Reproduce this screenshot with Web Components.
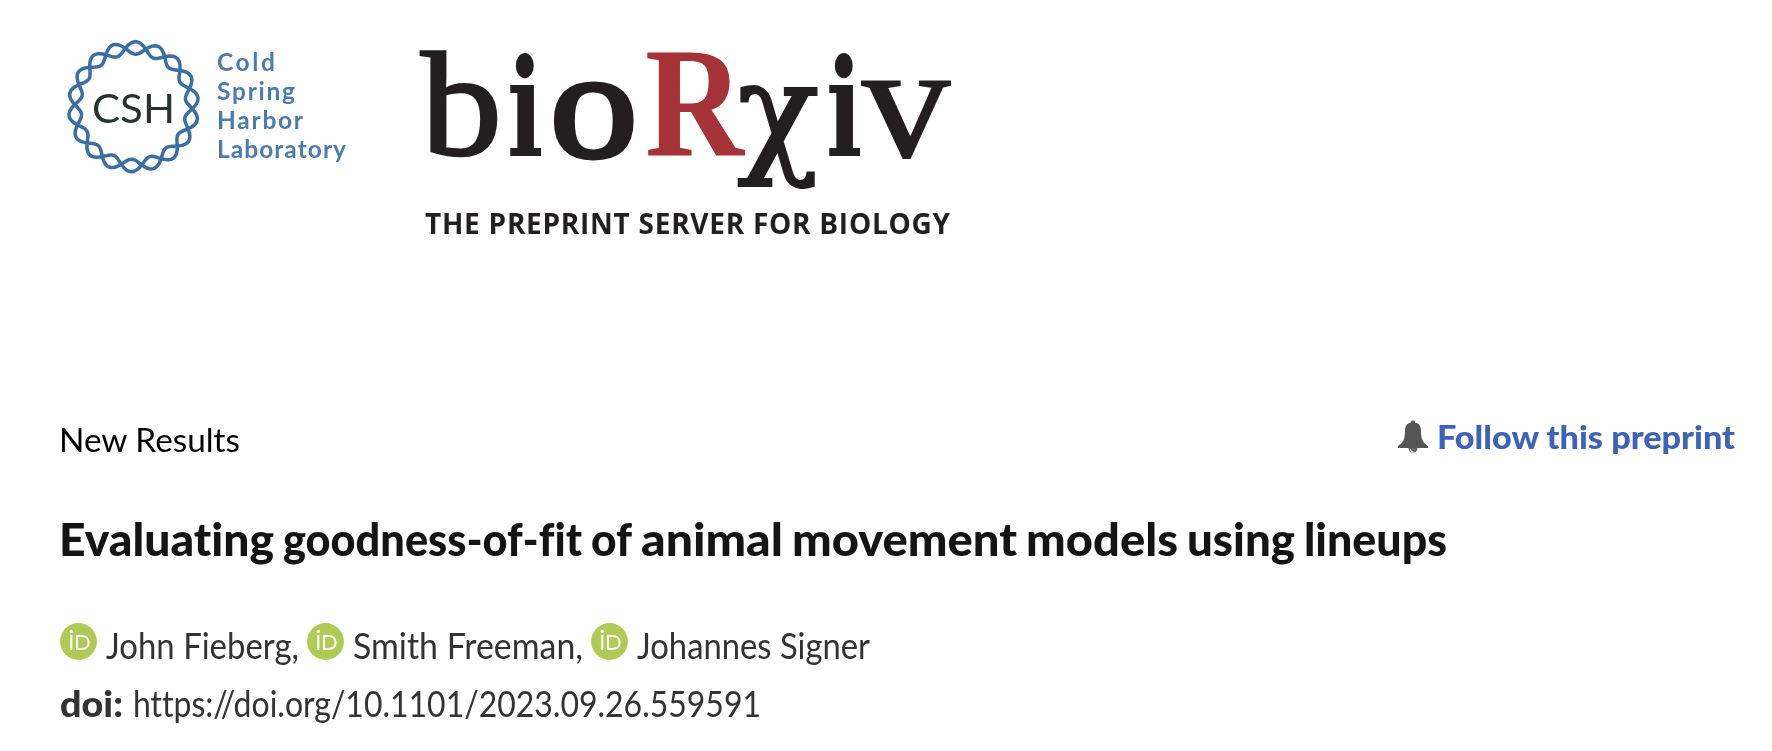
<!DOCTYPE html>
<html lang="en"><head><meta charset="utf-8"><title>bioRxiv</title>
<style>html,body{margin:0;background:#fff}body{font-family:Lato,"Open Sans",sans-serif;color:#333}</style></head>
<body><preprint-page></preprint-page>
<script>
function define(name, html, ready){
  customElements.define(name, class extends HTMLElement{
    connectedCallback(){
      if(this.shadowRoot) return;
      this.attachShadow({mode:'open'}).innerHTML = html;
      if(ready) ready.call(this);
    }
  });
}
// Text set to a given advance width by condensing or widening its letters.
define('fit-text', `<style>:host{display:block;white-space:pre;flex:none}span{display:inline-block;transform-origin:0 0;font-variant-ligatures:none}</style><span><slot></slot></span>`, function(){
  const s=this.shadowRoot.querySelector('span'), w=+this.getAttribute('w');
  this.style.width=w+'px';
  const fit=()=>{s.style.transform='none';s.style.transform='scaleX('+w/s.getBoundingClientRect().width+')'};
  fit(); document.fonts.ready.then(fit);
});
define('csh-logo', `<style>:host{display:block;width:380px;height:270px}svg{display:block;filter:blur(.6px)}</style>
<svg width="380" height="270" viewBox="0 0 380 270">
<g id="ring" fill="none" stroke="#3a6ea5" stroke-width="3.5"></g>
<text x="92" y="122.500" font-family="Lato" font-size="41" textLength="83" lengthAdjust="spacingAndGlyphs" fill="#2b3331">CSH</text>
<g font-family="Lato" font-weight="700" font-size="24.500" fill="#4c7bae">
<text x="217" y="71" textLength="58">Cold</text><text x="217" y="100" textLength="78">Spring</text>
<text x="217" y="129" textLength="86">Harbor</text><text x="217" y="158" textLength="129">Laboratory</text></g></svg>`, function(){
  const g=this.shadowRoot.getElementById('ring'); let out='';
  for(const sign of [1,-1]){
    let d='';
    for(let a=0;a<360;a+=2){
      const r=58.800+sign*6.300*Math.sin(9*(a-12)*Math.PI/180), t=a*Math.PI/180;
      d+=(a?'L':'M')+(133.5+r*Math.sin(t)).toFixed(2)+' '+(106.700-r*Math.cos(t)).toFixed(2);
    }
    out+='<path d="'+d+'Z"/>';
  }
  g.innerHTML=out;
});
define('biorxiv-logo', `<style>:host{display:block;width:600px;height:270px}svg{display:block;filter:blur(.6px)}</style>
<svg width="600" height="270" viewBox="380 0 600 270">
<g font-family="Liberation Serif" font-size="100" fill="#231f20" stroke="#231f20" stroke-width="0">
<text transform="translate(421,155) scale(1.62,1.49)" stroke-width="1.8">b</text>
<text transform="translate(507,156) scale(.96,1.34)" font-family="DejaVu Serif" font-weight="700">i</text>
<text transform="translate(550,156) scale(1.75,1.55)" stroke-width="3.2">o</text>
<text transform="translate(645,156) scale(1.37,1.57)" font-weight="700" fill="#a53337">R</text>
<text transform="translate(737,158) scale(1.36,1.34)" font-family="DejaVu Serif" stroke-width="1.5">χ</text>
<text transform="translate(826,156) scale(.96,1.34)" font-family="DejaVu Serif" font-weight="700">i</text>
<text transform="translate(862,156) scale(1.76,1.63)" stroke-width="1.2">v</text></g>
<text x="425" y="233.500" font-family="Open Sans" font-weight="700" font-size="28" textLength="525" fill="#231f20">THE PREPRINT SERVER FOR BIOLOGY</text></svg>`);
define('orcid-icon', `<style>:host{display:block;width:37px;height:37px;flex:none}svg{display:block}</style>
<svg width="37" height="37" viewBox="0 0 37 37"><circle cx="18.500" cy="18.500" r="18.400" fill="#afcb56"/>
<circle cx="11.300" cy="8.500" r="1.700" fill="#fff"/><path d="M11.300 12V27M17 13v13h4.500c4.400 0 7.200-2.500 7.200-6.500s-2.800-6.500-7.200-6.500z" fill="none" stroke="#fff" stroke-width="2.100"/></svg>`);
define('bell-icon', `<style>:host{display:block;width:32px;height:34px}svg{display:block}</style>
<svg width="32" height="34" viewBox="0 0 32 34"><path d="M14 2.500c0-3 4-3 4 0c4.500 1 6 4 6 8.500c0 8 2 12 7 15v2H1v-2c5-3 7-7 7-15c0-4.500 1.500-7.500 6-8.500z" fill="#555"/><path d="M11.500 28c0 6 9 6 9 0z" fill="#666"/><path d="M13.500 29c0 2 1 3 3 3" stroke="#fff" fill="none"/></svg>`);
define('author-name', `<style>:host{display:flex;align-items:flex-start;height:58px}orcid-icon{margin-top:8px}::slotted(*){margin-left:9px}</style><orcid-icon></orcid-icon><slot></slot>`);
define('preprint-page', `<style>
:host{display:block;width:1772px;height:751px;overflow:hidden;background:#fff}
header{display:flex;height:270px}
.meta{display:flex;justify-content:space-between;padding:149px 37px 0 59px;height:91px}
.kind{font-size:33px;line-height:40px;color:#000}
.follow{display:flex;height:38px;font-size:32px;line-height:36px;font-weight:900;color:#3d62b8}
.follow bell-icon{margin:1px 8px 0 0}
h1{display:flex;gap:9px;margin:1px 0 48px 59px;font-size:46px;line-height:56px;font-weight:900;color:#141414}
.authors,.doi{display:flex;margin-left:60px;font-size:36px;line-height:60px;height:58px}
.authors{gap:8px}.doi{gap:10px}b{font-weight:900}
</style>
<header><csh-logo></csh-logo><biorxiv-logo></biorxiv-logo></header>
<main><section class="meta"><fit-text class="kind" w="181">New Results</fit-text>
<div class="follow"><bell-icon></bell-icon><fit-text w="298">Follow this preprint</fit-text></div></section>
<h1><fit-text w="215">Evaluating</fit-text> <fit-text w="299">goodness-of-fit</fit-text> <fit-text w="41">of</fit-text> <fit-text w="142">animal</fit-text> <fit-text w="225">movement</fit-text> <fit-text w="152">models</fit-text> <fit-text w="108">using</fit-text> <fit-text w="143">lineups</fit-text></h1>
<section class="authors"><author-name><fit-text w="193">John Fieberg,</fit-text></author-name><author-name><fit-text w="230">Smith Freeman,</fit-text></author-name><author-name><fit-text w="233">Johannes Signer</fit-text></author-name></section>
<section class="doi"><b><fit-text w="63">doi:</fit-text></b><fit-text w="628">https://doi.org/10.1101/2023.09.26.559591</fit-text></section></main>`);
</script></body></html>
